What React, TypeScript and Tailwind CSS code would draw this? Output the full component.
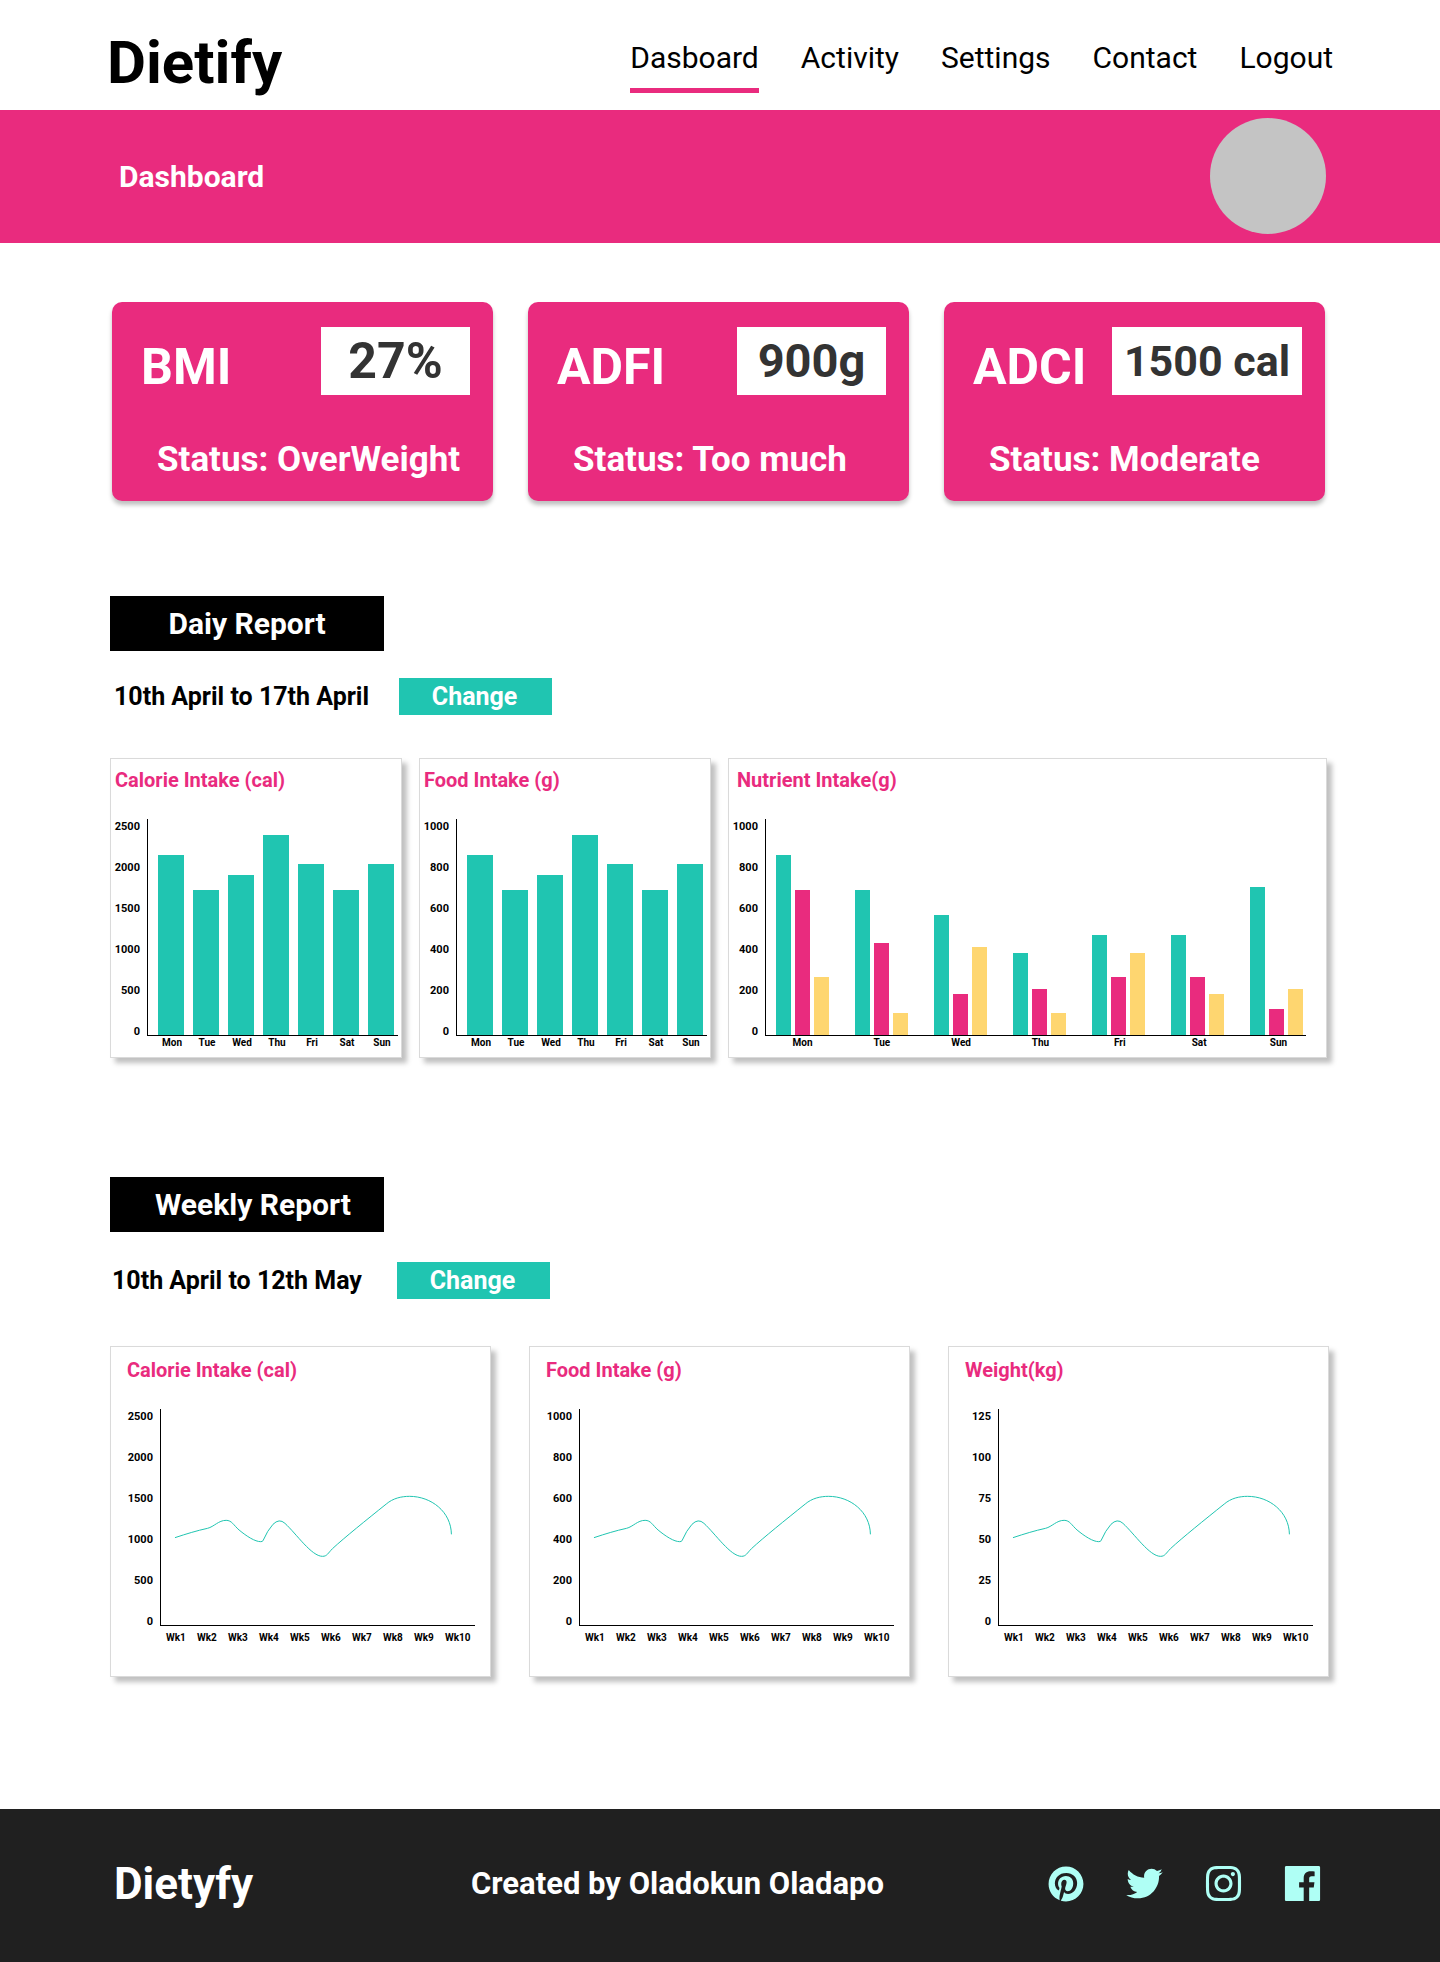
import React from "react";
import { AiFillFacebook, AiOutlineInstagram, AiOutlineTwitter } from "react-icons/ai";
import { FaPinterest } from "react-icons/fa";

const days = ["Mon", "Tue", "Wed", "Thu", "Fri", "Sat", "Sun"];
const weeks = ["Wk1", "Wk2", "Wk3", "Wk4", "Wk5", "Wk6", "Wk7", "Wk8", "Wk9", "Wk10"];
const thousandScale = ["1000", "800", "600", "400", "200", "0"];
const calorieScale = ["2500", "2000", "1500", "1000", "500", "0"];
const weightScale = ["125", "100", "75", "50", "25", "0"];
const intake = [180, 145, 160, 200, 171, 145, 171];
const nutrients = [
  [180, 145, 58],
  [145, 92, 22],
  [120, 41, 88],
  [82, 46, 22],
  [100, 58, 82],
  [100, 58, 41],
  [148, 26, 46],
];
const nutrientColors = ["bg-[#20c5b1]", "bg-[#e92b7e]", "bg-[#fed670]"];

function StatCard({ name, value, status, valueClass }: { name: string; value: string; status: string; valueClass: string }) {
  return (
    <article className="rounded-[10px] bg-[#e92b7e] pt-[25px] pr-[23px] pb-5 pl-[29px] text-white shadow-[0_4px_4px_rgba(0,0,0,0.25)]">
      <div className="flex items-start justify-between">
        <h2 className="mt-[10px] text-[50px] leading-[60px] font-bold">{name}</h2>
        <p className={`flex h-[68px] items-center justify-center bg-white font-bold text-[#333333] ${valueClass}`}>{value}</p>
      </div>
      <p className="mt-[42px] pl-4 text-[35px] leading-[42px] font-bold whitespace-nowrap">Status: {status}</p>
    </article>
  );
}

function ReportHeading({ title, range, titleClass, rowClass }: { title: string; range: string; titleClass: string; rowClass: string }) {
  return (
    <>
      <h2 className={`flex h-[55px] w-[274px] items-center justify-center bg-black text-[30px] font-bold text-white ${titleClass}`}>{title}</h2>
      <div className={`flex items-center ${rowClass}`}>
        <p className="text-[25px] leading-[30px] font-bold">{range}</p>
        <button type="button" className="h-[37px] w-[153px] bg-[#20c5b1] pr-[2px] text-[25px] leading-[30px] font-bold text-white">
          Change
        </button>
      </div>
    </>
  );
}

function Scale({ values }: { values: string[] }) {
  return (
    <div className="flex h-[221px] w-[30px] shrink-0 flex-col justify-between text-right text-[11px] leading-[16px] font-bold">
      {values.map((v) => (
        <span key={v}>{v}</span>
      ))}
    </div>
  );
}

const panel = "border border-[#dadada] bg-white shadow-[5px_5px_5px_rgba(0,0,0,0.25)]";
const panelTitle = "text-[20px] leading-[24px] font-bold text-[#e92b7e]";

function DailyBars({ title, scale }: { title: string; scale: string[] }) {
  return (
    <article className={`${panel} pt-[9px] pr-[3px] pb-[7px]`}>
      <h3 className={`${panelTitle} pl-1`}>{title}</h3>
      <div className="mt-[27px] flex">
        <div className="-ml-px">
          <Scale values={scale} />
        </div>
        <div className="ml-[7px] flex-1">
          <div className="flex h-[217px] items-end justify-between border-b border-l border-black pr-1 pl-[10px]">
            {intake.map((h, i) => (
              <div key={days[i]} className="w-[26px] bg-[#20c5b1]" style={{ height: h }} />
            ))}
          </div>
          <div className="flex justify-between pr-[3px] pl-3 text-[10px] leading-[14px] font-bold">
            {days.map((d) => (
              <span key={d} className="w-[26px] text-center">{d}</span>
            ))}
          </div>
        </div>
      </div>
    </article>
  );
}

function NutrientBars() {
  return (
    <article className={`${panel} pt-[9px] pr-5 pb-[7px]`}>
      <h3 className={`${panelTitle} pl-2`}>Nutrient Intake(g)</h3>
      <div className="mt-[27px] flex">
        <div className="-ml-px">
          <Scale values={thousandScale} />
        </div>
        <div className="ml-[7px] flex-1">
          <div className="flex h-[217px] items-end justify-between border-b border-l border-black pr-[3px] pl-[10px]">
            {nutrients.map((group, i) => (
              <div key={days[i]} className="flex items-end gap-1">
                {group.map((h, j) => (
                  <div key={j} className={`w-[15px] ${nutrientColors[j]}`} style={{ height: h }} />
                ))}
              </div>
            ))}
          </div>
          <div className="flex justify-between pr-px pl-[11px] text-[10px] leading-[14px] font-bold">
            {days.map((d) => (
              <span key={d} className="w-[53px] text-center">{d}</span>
            ))}
          </div>
        </div>
      </div>
    </article>
  );
}

function WeeklyLine({ title, scale }: { title: string; scale: string[] }) {
  return (
    <article className={`${panel} pt-[11px] pr-[15px] pb-[31px] pl-3`}>
      <h3 className={`${panelTitle} pl-1`}>{title}</h3>
      <div className="mt-[27px] flex">
        <Scale values={scale} />
        <div className="ml-[7px] flex-1">
          <div className="h-[217px] border-b border-l border-black">
            <svg viewBox="212 237 945 648" preserveAspectRatio="none" className="h-full w-full" role="img" aria-label={`${title} by week`}>
              <path
                d="M254 623C290 611 320 602 352 595C372 590 385 571 408 571C425 571 430 585 447 600C470 619 495 635 512 635Q518 636 520 630Q532 602 549 583Q568 564 585 580C620 612 665 679 698 679C712 679 714 670 728 656C765 622 830 570 890 522C910 505 935 499 960 499C1025 499 1085 545 1086 613"
                fill="none"
                stroke="#20c5b1"
                strokeWidth="1"
                vectorEffect="non-scaling-stroke"
              />
            </svg>
          </div>
          <div className="mt-[5px] -mr-px grid grid-cols-10 pl-[6px] text-[10px] leading-[14px] font-bold">
            {weeks.map((w) => (
              <span key={w}>{w}</span>
            ))}
          </div>
        </div>
      </div>
    </article>
  );
}

export default function App() {
  return (
    <div className="bg-white font-[Roboto,sans-serif] text-black">
      <header className="flex items-start justify-between px-[107px] pt-7 pb-3">
        <h1 className="text-[60px] leading-[70px] font-bold">Dietify</h1>
        <nav className="mt-3 flex gap-[42px] text-[30px] leading-[36px]">
          <a href="#dashboard" className="border-b-[5px] border-[#e92b7e] pb-3">Dasboard</a>
          <a href="#activity">Activity</a>
          <a href="#settings">Settings</a>
          <a href="#contact">Contact</a>
          <a href="#logout">Logout</a>
        </nav>
      </header>

      <div className="flex items-center justify-between bg-[#e92b7e] pt-2 pr-[114px] pb-[9px] pl-[119px]">
        <p className="pt-[2px] text-[30px] leading-[36px] font-bold text-white">Dashboard</p>
        <div className="size-[116px] rounded-full bg-[#c4c4c4]" />
      </div>

      <main className="pl-[110px]">
        <section className="mt-[59px] grid grid-cols-3 gap-[35px] pr-[115px] pl-[2px]">
          <StatCard name="BMI" value="27%" status="OverWeight" valueClass="w-[149px] text-[50px]" />
          <StatCard name="ADFI" value="900g" status="Too much" valueClass="w-[149px] text-[47px]" />
          <StatCard name="ADCI" value="1500 cal" status="Moderate" valueClass="w-[190px] text-[43px]" />
        </section>

        <section className="mt-[95px] pr-[113px]">
          <ReportHeading title="Daiy Report" range="10th April to 17th April" titleClass="" rowClass="mt-[27px] gap-[30px] pl-1" />
          <div className="mt-[43px] grid grid-cols-[292fr_292fr_599fr] gap-[17px]">
            <DailyBars title="Calorie Intake (cal)" scale={calorieScale} />
            <DailyBars title="Food Intake (g)" scale={thousandScale} />
            <NutrientBars />
          </div>
        </section>

        <section className="mt-[119px] pr-[111px]">
          <ReportHeading title="Weekly Report" range="10th April to 12th May" titleClass="pl-3" rowClass="mt-[30px] gap-[35px] pl-[2px]" />
          <div className="mt-[47px] grid grid-cols-3 gap-[38px]">
            <WeeklyLine title="Calorie Intake (cal)" scale={calorieScale} />
            <WeeklyLine title="Food Intake (g)" scale={thousandScale} />
            <WeeklyLine title="Weight(kg)" scale={weightScale} />
          </div>
        </section>
      </main>

      <footer className="mt-[132px] grid grid-cols-[357px_1fr_auto] items-center bg-[#202020] pt-[49px] pr-[115px] pb-[52px] pl-[114px] font-bold text-white">
        <p className="text-[44px] leading-[52px]">Dietyfy</p>
        <p className="text-[31px] leading-[36px]">Created by Oladokun Oladapo</p>
        <div className="flex gap-[34px] pb-px text-[#affff5]">
          <a href="#pinterest" aria-label="Pinterest" className="flex size-[45px] items-center justify-center"><FaPinterest size={36} /></a>
          <a href="#twitter" aria-label="Twitter"><AiOutlineTwitter size={45} /></a>
          <a href="#instagram" aria-label="Instagram"><AiOutlineInstagram size={45} /></a>
          <a href="#facebook" aria-label="Facebook"><AiFillFacebook size={45} /></a>
        </div>
      </footer>
    </div>
  );
}
